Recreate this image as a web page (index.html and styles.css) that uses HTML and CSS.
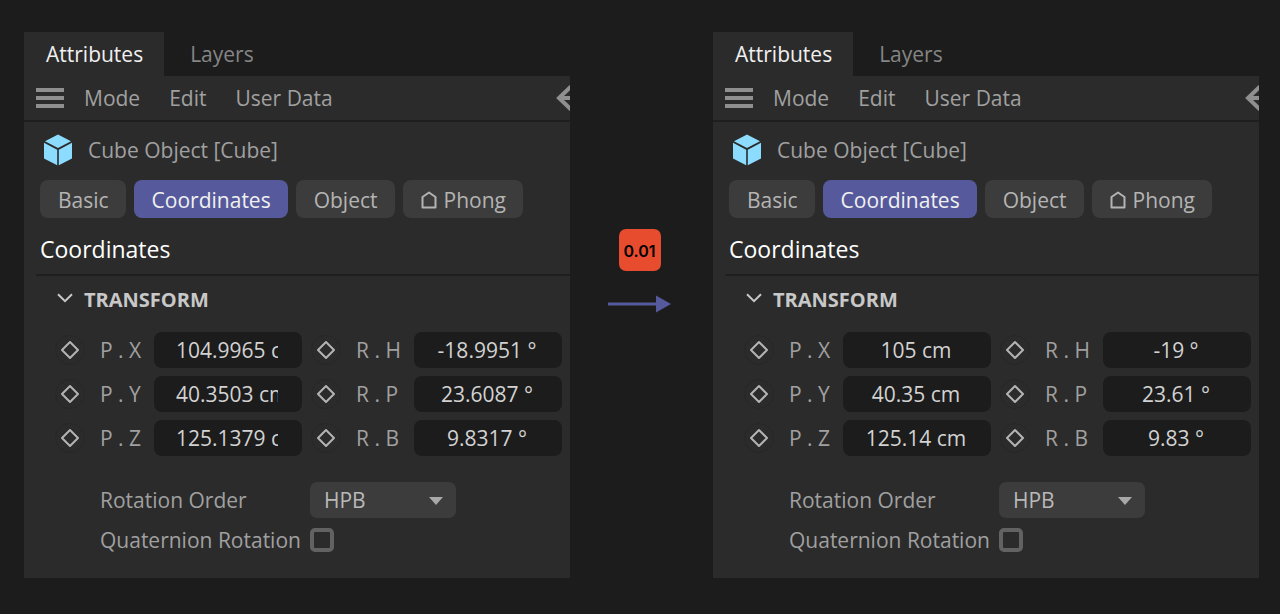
FILE: index.html
```html
<!DOCTYPE html>
<html lang="en">
<head>
<meta charset="utf-8">
<title>Attributes</title>
<link rel="stylesheet" href="styles.css">
</head>
<body>
<svg class="defs" aria-hidden="true">
  <symbol id="cube" viewBox="0 0 28 32">
    <path d="M14 0.5 27 7.2 14 14 1 7.2Z"/>
    <path d="M0 8.8 13.2 15.8V31.3L0 24.6Z"/>
    <path d="M28 8.8 14.8 15.8V31.3L28 24.6Z"/>
  </symbol>
  <symbol id="menu" viewBox="0 0 28 20"><path d="M0 0H28V4H0ZM0 8H28V12H0ZM0 16H28V20H0Z"/></symbol>
  <symbol id="back" viewBox="0 0 14 26"><path d="M15 1.5 3 13 15 24.5M4 13H14" fill="none" stroke="currentColor" stroke-width="4"/></symbol>
  <symbol id="phong" viewBox="0 0 16 18"><path d="M1.5 16.5V6L8 1.5 14.5 6V16.5Z" fill="none" stroke="currentColor" stroke-width="2" stroke-linejoin="round"/></symbol>
  <symbol id="chevron" viewBox="0 0 16 10"><path d="M1 1.2 8 8.2 15 1.2" fill="none" stroke="currentColor" stroke-width="2"/></symbol>
  <symbol id="diamond" viewBox="0 0 20 20"><path d="M10 2 18 10 10 18 2 10Z" fill="none" stroke="currentColor" stroke-width="2" stroke-linejoin="round"/></symbol>
</svg>
<main class="compare">
  <section class="panel">
    <div class="docks"><button class="dock active">Attributes</button><button class="dock">Layers</button></div>
    <div class="menubar">
      <button class="icon-button" aria-label="Menu"><svg class="menu-icon"><use href="#menu"/></svg></button>
      <button class="menu-item">Mode</button><button class="menu-item">Edit</button><button class="menu-item">User Data</button>
      <button class="icon-button back" aria-label="Back"><svg class="back-icon"><use href="#back"/></svg></button>
    </div>
    <header class="object"><svg class="cube-icon"><use href="#cube"/></svg><span>Cube Object [Cube]</span></header>
    <div class="tabs">
      <button class="tab">Basic</button><button class="tab active">Coordinates</button><button class="tab">Object</button>
      <button class="tab"><svg class="phong-icon"><use href="#phong"/></svg>Phong</button>
    </div>
    <h2 class="title">Coordinates</h2>
    <h3 class="group"><svg class="chevron-icon"><use href="#chevron"/></svg>TRANSFORM</h3>
    <div class="fields">
      <button class="key" aria-label="Key P.X"><svg><use href="#diamond"/></svg></button><label for="a-px">P . X</label><input class="value" id="a-px" value="104.9965 cm">
      <button class="key second" aria-label="Key R.H"><svg><use href="#diamond"/></svg></button><label for="a-rh">R . H</label><input class="value" id="a-rh" value="-18.9951 °">
      <button class="key" aria-label="Key P.Y"><svg><use href="#diamond"/></svg></button><label for="a-py">P . Y</label><input class="value" id="a-py" value="40.3503 cm">
      <button class="key second" aria-label="Key R.P"><svg><use href="#diamond"/></svg></button><label for="a-rp">R . P</label><input class="value" id="a-rp" value="23.6087 °">
      <button class="key" aria-label="Key P.Z"><svg><use href="#diamond"/></svg></button><label for="a-pz">P . Z</label><input class="value" id="a-pz" value="125.1379 cm">
      <button class="key second" aria-label="Key R.B"><svg><use href="#diamond"/></svg></button><label for="a-rb">R . B</label><input class="value" id="a-rb" value="9.8317 °">
    </div>
    <div class="options">
      <label for="a-order">Rotation Order</label>
      <span class="select"><select id="a-order"><option>HPB</option></select></span>
      <label for="a-quat">Quaternion Rotation</label>
      <input class="check" type="checkbox" id="a-quat">
    </div>
  </section>

  <div class="step">
    <span class="badge">0.01</span>
    <svg class="arrow" viewBox="0 0 64 18" aria-hidden="true"><path d="M0 7.5H48V0.5L63 9 48 17.5V10.5H0Z"/></svg>
  </div>

  <section class="panel">
    <div class="docks"><button class="dock active">Attributes</button><button class="dock">Layers</button></div>
    <div class="menubar">
      <button class="icon-button" aria-label="Menu"><svg class="menu-icon"><use href="#menu"/></svg></button>
      <button class="menu-item">Mode</button><button class="menu-item">Edit</button><button class="menu-item">User Data</button>
      <button class="icon-button back" aria-label="Back"><svg class="back-icon"><use href="#back"/></svg></button>
    </div>
    <header class="object"><svg class="cube-icon"><use href="#cube"/></svg><span>Cube Object [Cube]</span></header>
    <div class="tabs">
      <button class="tab">Basic</button><button class="tab active">Coordinates</button><button class="tab">Object</button>
      <button class="tab"><svg class="phong-icon"><use href="#phong"/></svg>Phong</button>
    </div>
    <h2 class="title">Coordinates</h2>
    <h3 class="group"><svg class="chevron-icon"><use href="#chevron"/></svg>TRANSFORM</h3>
    <div class="fields">
      <button class="key" aria-label="Key P.X"><svg><use href="#diamond"/></svg></button><label for="b-px">P . X</label><input class="value" id="b-px" value="105 cm">
      <button class="key second" aria-label="Key R.H"><svg><use href="#diamond"/></svg></button><label for="b-rh">R . H</label><input class="value" id="b-rh" value="-19 °">
      <button class="key" aria-label="Key P.Y"><svg><use href="#diamond"/></svg></button><label for="b-py">P . Y</label><input class="value" id="b-py" value="40.35 cm">
      <button class="key second" aria-label="Key R.P"><svg><use href="#diamond"/></svg></button><label for="b-rp">R . P</label><input class="value" id="b-rp" value="23.61 °">
      <button class="key" aria-label="Key P.Z"><svg><use href="#diamond"/></svg></button><label for="b-pz">P . Z</label><input class="value" id="b-pz" value="125.14 cm">
      <button class="key second" aria-label="Key R.B"><svg><use href="#diamond"/></svg></button><label for="b-rb">R . B</label><input class="value" id="b-rb" value="9.83 °">
    </div>
    <div class="options">
      <label for="b-order">Rotation Order</label>
      <span class="select"><select id="b-order"><option>HPB</option></select></span>
      <label for="b-quat">Quaternion Rotation</label>
      <input class="check" type="checkbox" id="b-quat">
    </div>
  </section>
</main>
</body>
</html>
```
FILE: styles.css
```css
* { box-sizing: border-box; }
body {
  margin: 0;
  background: #1c1c1c;
  color: #a0a0a0;
  font: 21px/30px "Open Sans", "Noto Sans", sans-serif;
}
button, input, select {
  margin: 0;
  padding: 0;
  border: 0;
  background: none;
  color: inherit;
  font: inherit;
}
svg { display: block; fill: currentColor; }
.defs { display: none; }
.compare {
  display: grid;
  grid-template-columns: minmax(0, 1fr) 143px minmax(0, 1fr);
  padding: 32px 21px 36px 24px;
}
.docks { display: flex; height: 44px; }
.dock { padding: 0 26px; color: #858585; }
.dock.active { padding: 0 21px 0 22px; background: #2b2b2b; color: #f0f0f0; }
.menubar {
  display: flex;
  align-items: center;
  gap: 29px;
  height: 46px;
  padding-left: 12px;
  border-bottom: 2px solid #1f1f1f;
  background: #2b2b2b;
}
.icon-button { color: #8f8f8f; }
.icon-button:first-child { margin-right: -9px; }
.menu-icon { width: 28px; height: 20px; }
.back { margin-left: auto; }
.back-icon { width: 14px; height: 26px; }
.object {
  display: flex;
  align-items: center;
  gap: 16px;
  height: 58px;
  padding: 0 0 2px 20px;
  background: #2b2b2b;
}
.cube-icon { width: 28px; height: 32px; color: #8cdcff; }
.tabs { display: flex; gap: 8px; padding-left: 16px; background: #2b2b2b; }
.tab {
  display: flex;
  align-items: center;
  gap: 7px;
  height: 38px;
  padding: 2px 17px 0 18px;
  border-radius: 8px;
  background: #3c3c3c;
  color: #b4b4b4;
}
.tab.active { background: #565a9c; color: #f0f0f0; }
.phong-icon { width: 16px; height: 18px; }
.title {
  margin: 0;
  padding: 15px 0 11px 16px;
  background: linear-gradient(#1f1f1f, #1f1f1f) 12px 100% / 100% 2px no-repeat #2b2b2b;
  color: #ffffff;
  font-size: 23px;
  font-weight: 400;
  line-height: 32px;
}
.group {
  display: flex;
  align-items: center;
  gap: 11px;
  margin: 0;
  padding: 9px 0 17px 33px;
  background: #2b2b2b;
  color: #c8c8c8;
  font-size: 20px;
  font-weight: 700;
}
.chevron-icon { width: 16px; height: 10px; margin-bottom: 4px; }
.fields {
  display: grid;
  grid-template-columns: 45px 54px 1fr 54px 58px 1fr;
  gap: 8px 0;
  align-items: center;
  padding: 0 8px 0 31px;
  background: #2b2b2b;
}
.key {
  display: grid;
  place-items: center;
  width: 30px;
  height: 30px;
  border: 1px solid #272727;
  border-radius: 50%;
  color: #b4b4b4;
}
.key.second { margin-left: 9px; }
.key svg { width: 20px; height: 20px; }
.value {
  width: 100%;
  height: 36px;
  padding: 0 24px 0 22px;
  border-radius: 8px;
  background: #1c1c1c;
  color: #d2d2d2;
  text-align: center;
}
.options {
  display: grid;
  grid-template-columns: 210px 146px;
  gap: 7px 0;
  align-items: center;
  padding: 26px 0 23px 76px;
  background: #2b2b2b;
}
.select { position: relative; }
.select select {
  display: block;
  appearance: none;
  width: 100%;
  height: 36px;
  padding: 0 14px;
  border-radius: 7px;
  background: #3c3c3c;
  color: #b9b9b9;
}
.select::after {
  content: "";
  position: absolute;
  top: 15px;
  right: 13px;
  width: 14px;
  height: 8px;
  background: #a8a8a8;
  clip-path: polygon(0 0, 100% 0, 50% 100%);
  pointer-events: none;
}
.check {
  appearance: none;
  width: 24px;
  height: 24px;
  border: 4px solid #626262;
  border-radius: 5px;
}
.step {
  display: flex;
  flex-direction: column;
  align-items: center;
  gap: 24px;
  padding: 197px 4px 0 0;
}
.badge {
  display: grid;
  place-items: center;
  width: 42px;
  height: 42px;
  padding-top: 1px;
  border-radius: 7px;
  background: #e84c2e;
  color: #000000;
  font: 600 16px/20px Inter, sans-serif;
}
.arrow { width: 64px; height: 18px; fill: #565a9c; }
```
